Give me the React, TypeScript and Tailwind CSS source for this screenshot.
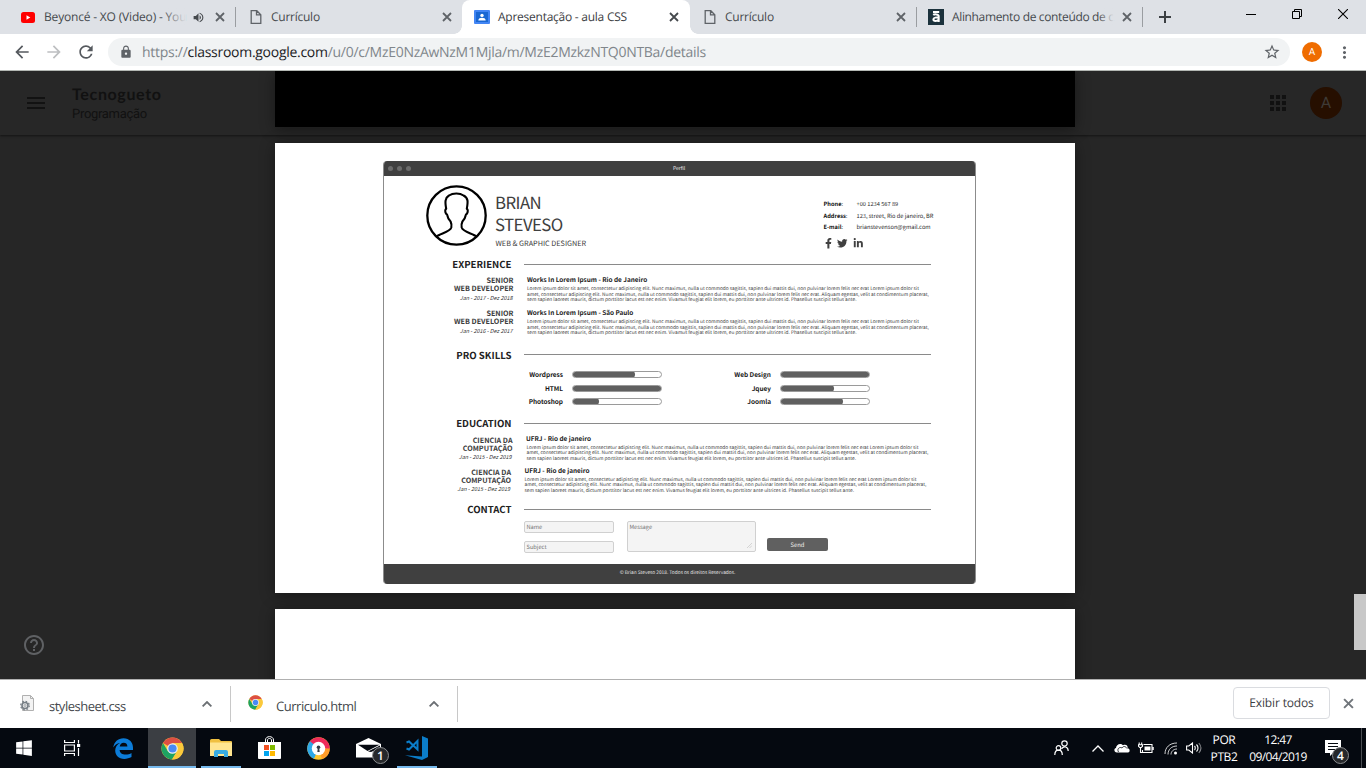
import type { ReactNode } from "react";
import {
  MdArrowBack,
  MdArrowForward,
  MdRefresh,
  MdLock,
  MdStarBorder,
  MdMoreVert,
  MdMenu,
  MdApps,
  MdHelpOutline,
  MdVolumeUp,
} from "react-icons/md";
import { FaFacebookF, FaTwitter, FaLinkedinIn, FaWindows } from "react-icons/fa";

const LOREM = [
  "Lorem ipsum dolor sit amet, consectetur adipiscing elit. Nunc maximus, nulla ut commodo sagittis, sapien dui mattis dui, non pulvinar lorem felis nec erat Lorem ipsum dolor sit",
  "amet, consectetur adipiscing elit. Nunc maximus, nulla ut commodo sagittis, sapien dui mattis dui, non pulvinar lorem felis nec erat. Aliquam egestas, velit at condimentum placerat,",
  "sem sapien laoreet mauris, dictum porttitor lacus est nec enim. Vivamus feugiat elit lorem, eu porttitor ante ultrices id. Phasellus suscipit tellus ante.",
];

function Cross({ className }: { className: string }) {
  return (
    <svg viewBox="0 0 10 10" className={className} fill="none" stroke="currentColor">
      <path d="M1 1l8 8M9 1l-8 8" strokeWidth="1.8" />
    </svg>
  );
}

function FileIcon() {
  return (
    <svg viewBox="0 0 12 16" className="h-4 w-3 shrink-0" fill="none" stroke="#5f6368" strokeWidth="1.3">
      <path d="M1.2 1.7h5.6l4 4v8.6H1.2zM6.5 1.7v4.2h4.3" />
    </svg>
  );
}

function ChromeLogo({ className }: { className: string }) {
  return (
    <svg viewBox="0 0 48 48" className={className}>
      <circle cx="24" cy="24" r="23" fill="#fbc93b" />
      <path d="M24 24 L4.1 12.5 A23 23 0 0 1 43.9 12.5 Z" fill="#dd4f43" />
      <path d="M4.1 12.5 A23 23 0 0 0 23 47 L33.5 29.5 L24 24 L14.5 29.5 Z" fill="#1da362" />
      <path d="M24 12.5h19.9L40 19H24z" fill="#dd4f43" />
      <path d="M24 24L33.5 29.5L23 47A23 23 0 0 0 43.9 12.5H24z" fill="#fbc93b" />
      <circle cx="24" cy="24" r="11" fill="#f1f1f1" />
      <circle cx="24" cy="24" r="8.6" fill="#4a8af4" />
    </svg>
  );
}

function Tab({
  icon,
  title,
  width,
  titleClass,
  fade,
  extra,
  close,
  sep,
}: {
  icon: ReactNode;
  title: string;
  width: string;
  titleClass: string;
  fade?: string;
  extra?: ReactNode;
  close: string;
  sep?: boolean;
}) {
  return (
    <div className={`flex h-[34px] shrink-0 items-center ${width}`}>
      {icon}
      <span className={`whitespace-nowrap text-[12px] leading-[18px] text-[#45494d] ${titleClass}`}>{title}</span>
      {fade && <span className={`h-5 shrink-0 bg-linear-to-r from-[#dee1e600] to-[#dee1e6] ${fade}`} />}
      <span className="ml-auto flex items-center">
        {extra}
        <Cross className={`h-[10px] w-[10px] text-[#5f6368] ${close}`} />
        <span className={`h-5 w-px ${sep ? "bg-[#9a9da1]" : ""}`} />
      </span>
    </div>
  );
}

function TabStrip() {
  return (
    <div className="flex h-[34px] bg-[#dee1e6]">
      <Tab
        width="w-[236px] pl-[21px]"
        icon={
          <svg viewBox="0 0 14 11" className="h-[11px] w-[14px] shrink-0">
            <rect width="14" height="11" rx="2.500" fill="#f00" />
            <path d="M5.500 3.200L9.300 5.500 5.500 7.800z" fill="#fff" />
          </svg>
        }
        title="Beyoncé - XO (Video) - You"
        titleClass="ml-[9px] tracking-[-0.18px]"
        fade="-ml-6 w-6"
        extra={<MdVolumeUp className="mr-[10px] h-[13px] w-[13px] text-[#45494d]" />}
        close="mr-[10px]"
        sep
      />
      <Tab
        width="w-[226px] pl-[14px]"
        icon={<FileIcon />}
        title="Currículo"
        titleClass="ml-[9px] tracking-[-0.25px]"
        close="mr-[9px]"
      />
      <div className="relative flex h-[34px] w-[228px] shrink-0 items-center rounded-t-lg bg-white pl-3">
        <span className="absolute bottom-0 -left-2 h-2 w-2 bg-[radial-gradient(circle_at_0_0,#dee1e6_7.5px,#fff_8px)]" />
        <span className="absolute -right-2 bottom-0 h-2 w-2 bg-[radial-gradient(circle_at_100%_0,#dee1e6_7.5px,#fff_8px)]" />
        <svg viewBox="0 0 16 14" className="h-[14px] w-4 shrink-0">
          <rect width="16" height="14" rx="1" fill="#4285f4" />
          <rect x="2" y="2" width="12" height="10" fill="#1967d2" />
          <circle cx="8" cy="5.4" r="1.7" fill="#fff" />
          <path d="M4.3 10.5c0-2 2-2.700 3.700-2.700s3.700.7 3.700 2.700z" fill="#fff" />
        </svg>
        <span className="ml-2 whitespace-nowrap text-[12px] leading-[18px] tracking-[-0.25px] text-[#3c4043]">
          Apresentação - aula CSS
        </span>
        <Cross className="mr-[11px] ml-auto h-[10px] w-[10px] text-[#45494d]" />
      </div>
      <Tab
        width="w-[227px] pl-[14px]"
        icon={<FileIcon />}
        title="Currículo"
        titleClass="ml-[9px] tracking-[-0.25px]"
        close="mr-[10px]"
        sep
      />
      <Tab
        width="w-[226px] pl-[11px]"
        icon={
          <svg viewBox="0 0 16 16" className="h-4 w-4 shrink-0">
            <rect width="16" height="16" fill="#1c323d" />
            <path
              d="M5 3h6.200M5.200 5.900c1-.8 5.500-1 5.500 1.400v5.700M10.600 8.700c-2-.3-5.200-.4-5.200 1.600 0 2.200 4.100 2 5.200.2"
              stroke="#fff"
              strokeWidth="2"
              fill="none"
            />
          </svg>
        }
        title="Alinhamento de conteúdo de c"
        titleClass="ml-2 tracking-[-0.35px]"
        fade="-ml-4 w-4"
        close="mr-[10px]"
        sep
      />
      <div className="flex items-center pl-4">
        <svg viewBox="0 0 12 12" className="h-3 w-3" stroke="#3c4043" strokeWidth="2">
          <path d="M6 0v12M0 6h12" />
        </svg>
      </div>
      <div className="ml-auto flex h-[28px] items-center gap-9 pr-[18px]">
        <svg viewBox="0 0 10 10" className="h-[10px] w-[10px]" stroke="#000" strokeWidth="1">
          <path d="M0 5.500h10" />
        </svg>
        <svg viewBox="0 0 10 10" className="h-[10px] w-[10px]" fill="none" stroke="#000" strokeWidth="1">
          <path d="M.5 2.500h7v7h-7zM2.500 2.500v-2h7v7h-2" />
        </svg>
        <svg viewBox="0 0 10 10" className="h-[10px] w-[10px]" stroke="#000" strokeWidth="1.100">
          <path d="M0 0l10 10M10 0L0 10" />
        </svg>
      </div>
    </div>
  );
}

function Toolbar() {
  return (
    <div className="flex h-[37px] items-center border-b border-[#b3b7b3] bg-white pl-3">
      <MdArrowBack className="h-5 w-5 text-[#55595e]" />
      <MdArrowForward className="ml-3 h-5 w-5 text-[#bdbfc1]" />
      <MdRefresh className="ml-3 h-5 w-5 text-[#55595e]" />
      <div className="ml-3 flex h-7 w-[1182px] items-center rounded-full bg-[#f1f3f4] pr-[9px] pl-[11px]">
        <MdLock className="h-[14px] w-[14px] text-[#5f6368]" />
        <span className="ml-[9px] whitespace-nowrap pt-px text-[14px] leading-5 tracking-[-0.28px] text-[#80868b]">
          https://<span className="text-[#202124]">classroom.google.com</span>
          /u/0/c/MzE0NzAwNzM1Mjla/m/MzE2MzkzNTQ0NTBa/details
        </span>
        <MdStarBorder className="ml-auto h-[18px] w-[18px] text-[#5f6368]" />
      </div>
      <span className="ml-3 flex h-5 w-5 items-center justify-center rounded-full bg-[#ef6c00] font-['Roboto'] text-[10px] text-white">
        A
      </span>
      <MdMoreVert className="ml-[13px] h-[19px] w-[19px] text-[#5f6368]" />
    </div>
  );
}

function SectionTitle({ title, className }: { title: string; className: string }) {
  return (
    <div className="flex h-4 shrink-0 items-center">
      <h2 className={`w-[127.5px] shrink-0 whitespace-nowrap text-right font-bold leading-4 text-[#222] ${className}`}>
        {title}
      </h2>
      <span className="ml-[12.5px] h-px w-[407px] bg-[#8a8a8a]" />
    </div>
  );
}

function Entry({
  role,
  date,
  title,
  left,
  right,
  titleClass,
  dateClass,
}: {
  role: [string, string];
  date: string;
  title: string;
  left: string;
  right: string;
  titleClass: string;
  dateClass: string;
}) {
  return (
    <div className="flex h-[26px] shrink-0">
      <div className={`shrink-0 whitespace-nowrap text-right ${left}`}>
        <p className="text-[7.200px] font-bold leading-[8.5px] text-[#3c3c3c]">{role[0]}</p>
        <p className="text-[7.200px] font-bold leading-[8.5px] text-[#3c3c3c]">{role[1]}</p>
        <p className={`pr-px text-[5.450px] italic leading-[8px] text-[#333] ${dateClass}`}>{date}</p>
      </div>
      <div className={`shrink-0 whitespace-nowrap ${right}`}>
        <h3 className={`text-[6.400px] font-bold leading-[8px] text-[#222] ${titleClass}`}>{title}</h3>
        <div className="text-[4.810px] leading-[5.5px] text-[#3a3a3a]">
          {LOREM.map((l) => (
            <p key={l}>{l}</p>
          ))}
        </div>
      </div>
    </div>
  );
}

function Skill({ name, value, label }: { name: string; value: number; label: string }) {
  return (
    <div className="flex h-[13.8px] items-center">
      <span className={`shrink-0 whitespace-nowrap text-right text-[6.450px] font-bold leading-[9px] text-[#181818] ${label}`}>
        {name}
      </span>
      <span className="ml-[9px] block h-[7px] w-[90px] overflow-hidden rounded-full border border-[#9a9a9a] bg-white">
        <span
          className="-mt-px -ml-px block h-[7px] rounded-full bg-[#606060]"
          style={{ width: `${value * 0.9}px` }}
        />
      </span>
    </div>
  );
}

function Contact({ label, children }: { label: string; children: ReactNode }) {
  return (
    <div className="flex whitespace-nowrap text-[5.700px] leading-[11.25px]">
      <span className="w-[33px] shrink-0 text-[#444]">
        <b className="text-[#111]">{label}</b>:
      </span>
      <span className="text-[#2a2a2a]">{children}</span>
    </div>
  );
}

function Resume() {
  return (
    <div className="mt-[18px] ml-[108px] flex h-[423px] w-[593px] flex-col overflow-hidden rounded-[4px] border-x border-[#8c8c8c] bg-white font-['Noto_Sans_CJK_SC','Noto_Sans',sans-serif]">
      <div className="-mx-px flex h-[15px] shrink-0 items-center bg-[#404040] pl-[5px]">
        <span className="h-[5px] w-[5px] rounded-full bg-[#6c6c6c]" />
        <span className="ml-1 h-[5px] w-[5px] rounded-full bg-[#6c6c6c]" />
        <span className="ml-1 h-[5px] w-[5px] rounded-full bg-[#6c6c6c]" />
        <span className="ml-[262px] text-[5px] leading-[15px] text-[#eee]">Perfil</span>
      </div>
      <div className="flex h-20 shrink-0">
        <svg viewBox="0 0 61 61" className="mt-[9px] ml-[42px] h-[61px] w-[61px] shrink-0" fill="none" stroke="#000" strokeWidth="2.100">
          <circle cx="30.500" cy="30.500" r="29.200" strokeWidth="2.300" />
          <path
            strokeLinejoin="round"
            d="M10.500 51.500C14 48.500 24 47 25.300 42.500 25.800 40 25.300 38 24.600 36.500 22.600 34.500 21.500 32 21 29.500 19.600 29 18.800 26 19.500 24.500L20.200 23.800C19 17 18.800 13 23 10.500 27 7.800 34 8 37.500 10.500 42.500 13 42 17 40.800 23.800L41.500 24.500C42.200 26 41.400 29 40 29.500 39.500 32 38.400 34.500 36.400 36.500 35.700 38 35.200 40 35.700 42.500 37 47 47 48.500 50.500 51.500"
          />
        </svg>
        <div className="ml-[8px] whitespace-nowrap pt-[15.200px] text-[#404040]">
          <h1 className="text-[16.800px] leading-[22.300px] tracking-[-0.55px]">
            BRIAN
            <br />
            STEVESO
          </h1>
          <p className="mt-[1.500px] ml-[.5px] text-[7.250px] leading-[14px]">WEB &amp; GRAPHIC DESIGNER</p>
        </div>
        <div className="mr-[37.500px] ml-auto w-[114px] pt-[22.300px]">
          <Contact label="Phone">+00 1234 567 89</Contact>
          <Contact label="Address">123, street, Rio de janeiro, BR</Contact>
          <Contact label="E-mail">brianstevenson@gmail.com</Contact>
          <div className="mt-[6px] flex gap-[4.800px] text-[#404040]">
            <FaFacebookF className="h-[10.500px] w-[9px]" />
            <FaTwitter className="h-[10.500px] w-[10.500px]" />
            <FaLinkedinIn className="h-[10.500px] w-[10.500px]" />
          </div>
        </div>
      </div>
      <SectionTitle title="EXPERIENCE" className="text-[9.600px]" />
      <div className="flex h-[74.500px] shrink-0 flex-col gap-[7px] pt-[4.500px]">
        <Entry role={["SENIOR", "WEB DEVELOPER"]} date="Jan - 2017 - Dez 2018" title="Works In Lorem Ipsum - Rio de Janeiro" left="w-[129.500px]" right="ml-[13.500px] -mt-[.5px]" titleClass="mb-[2.300px]" dateClass="mt-[.5px]" />
        <Entry role={["SENIOR", "WEB DEVELOPER"]} date="Jan - 2016 - Dez 2017" title="Works In Lorem Ipsum - São Paulo" left="w-[129.500px]" right="ml-[13.500px] -mt-[.5px]" titleClass="mb-[2.300px]" dateClass="mt-[.5px]" />
      </div>
      <SectionTitle title="PRO SKILLS" className="text-[9.650px]" />
      <div className="flex h-[52.500px] shrink-0 pt-[5px]">
        <div>
          <Skill name="Wordpress" value={70} label="w-[179px]" />
          <Skill name="HTML" value={100} label="w-[179px]" />
          <Skill name="Photoshop" value={30} label="w-[179px]" />
        </div>
        <div>
          <Skill name="Web Design" value={100} label="w-[109px]" />
          <Skill name="Jquey" value={60} label="w-[109px]" />
          <Skill name="Joomla" value={70} label="w-[109px]" />
        </div>
      </div>
      <SectionTitle title="EDUCATION" className="text-[9.600px]" />
      <div className="flex h-[70px] shrink-0 flex-col gap-[6px] pt-[5.500px]">
        <Entry role={["CIENCIA DA", "COMPUTAÇÃO"]} date="Jan - 2015 - Dez 2019" title="UFRJ - Rio de janeiro" left="w-[128.500px]" right="-mt-[2px] ml-[14px]" titleClass="-ml-[.5px] mb-[2px]" dateClass="-mt-[.7px]" />
        <Entry role={["CIENCIA DA", "COMPUTAÇÃO"]} date="Jan - 2015 - Dez 2019" title="UFRJ - Rio de janeiro" left="w-[127px]" right="-mt-[2px] ml-[13.500px]" titleClass="mb-[2px]" dateClass="-mt-[.7px]" />
      </div>
      <SectionTitle title="CONTACT" className="text-[9.600px]" />
      <div className="flex grow pt-[3.500px] pl-[140px] text-[5.700px] leading-[11px] text-[#757575]">
        <div className="flex w-[90px] flex-col gap-[8px]">
          <div className="h-3 rounded-[2px] border border-[#d0d0d0] bg-[#f4f4f4] pl-[1.500px] leading-[10px]">Name</div>
          <div className="h-3 rounded-[2px] border border-[#d0d0d0] bg-[#f4f4f4] pl-[1.500px] leading-[10px]">Subject</div>
        </div>
        <div className="ml-[13px] flex h-[31px] w-[129px] items-end justify-between rounded-[2px] border border-[#d0d0d0] bg-[#f4f4f4] pl-[1.500px]">
          <span className="self-start leading-[10px]">Message</span>
          <svg viewBox="0 0 6 6" className="mr-[3px] mb-[3px] h-[5px] w-[5px]" stroke="#c4c4c4" strokeWidth=".8">
            <path d="M0 6L6 0M3 6L6 3" />
          </svg>
        </div>
        <div className="mt-[17px] ml-[11px] h-[13px] w-[61px] rounded-[2px] bg-[#606060] text-center text-[5.900px] leading-[13px] text-[#eee]">
          Send
        </div>
      </div>
      <div className="-mx-px h-5 shrink-0 bg-[#404040] text-center text-[4.800px] leading-[18px] text-[#e6e6e6]">
        <span className="mr-[4px]">© Brian Steveso 2018. Todos os direitos Reservados.</span>
      </div>
    </div>
  );
}

function Viewer() {
  return (
    <main className="relative h-[608px] overflow-hidden bg-[#262626]">
      <header className="flex h-16 items-center bg-[#272727] pr-6 pl-6 font-['Roboto'] text-[#111] shadow-[0_1px_2px_#141414]">
        <MdMenu className="h-6 w-6 text-[#121212]" />
        <div className="ml-6 pt-[2px]">
          <p className="font-['Lato'] text-[16px] font-bold leading-[21px] tracking-[0.65px]">Tecnogueto</p>
          <p className="text-[13px] leading-[19px] tracking-[-0.3px]">Programação</p>
        </div>
        <MdApps className="mr-5 ml-auto h-6 w-6 text-[#111]" />
        <span className="flex h-8 w-8 items-center justify-center rounded-full bg-[#260f00] text-[16px] text-[#3e3a36]">
          A
        </span>
      </header>
      <MdHelpOutline className="mt-[498px] ml-[22px] h-6 w-6 text-[#5f6164]" />
      <div className="absolute top-0 left-[275px] flex w-[800px] flex-col gap-4">
        <div className="h-14 bg-black shadow-[0_2px_14px_rgba(0,0,0,0.4)]" />
        <div className="flex h-[450px] bg-white shadow-[0_2px_14px_rgba(0,0,0,0.4)]">
          <Resume />
        </div>
        <div className="h-[80px] bg-white shadow-[0_2px_14px_rgba(0,0,0,0.4)]" />
      </div>
      <div className="absolute top-[523px] right-0 h-14 w-3 bg-[#c8c8c8]" />
    </main>
  );
}

function Chevron() {
  return (
    <svg viewBox="0 0 10 6" className="h-[6px] w-[10px]" fill="none" stroke="#6b6f73" strokeWidth="1.800">
      <path d="M.6 5.400L5 1l4.400 4.400" />
    </svg>
  );
}

function Downloads() {
  return (
    <div className="flex h-[49px] items-center border-t border-[#b0b0b0] bg-white text-[13px] leading-5 text-[#45494d]">
      <div className="flex h-9 w-[231px] items-center border-r border-[#c8c8c8] pl-5">
        <svg viewBox="0 0 14 16" className="mb-[2px] h-4 w-[14px]" fill="none">
          <path d="M2.500.5h8l3 3v12h-11z" fill="#f3f3f3" stroke="#b0b0b0" />
          <path d="M10.500.5v3h3" stroke="#b0b0b0" />
          <circle cx="5" cy="10.500" r="3" stroke="#777f86" strokeWidth="1.600" fill="#eee" />
          <circle cx="5" cy="10.500" r="4.300" stroke="#777f86" strokeWidth="1.200" strokeDasharray="1.700 1.677" />
          <circle cx="5" cy="10.500" r="1" stroke="#777f86" strokeWidth=".6" />
        </svg>
        <span className="ml-[15px] pt-1 tracking-[-0.48px]">stylesheet.css</span>
        <span className="mr-[18px] ml-auto">
          <Chevron />
        </span>
      </div>
      <div className="flex h-9 w-[227px] items-center border-r border-[#c8c8c8] pl-[17px]">
        <ChromeLogo className="mb-[3px] h-[15px] w-[15px]" />
        <span className="ml-[13px] pt-1 tracking-[-0.45px]">Curriculo.html</span>
        <span className="mr-[18px] ml-auto">
          <Chevron />
        </span>
      </div>
      <div className="-mt-[2px] ml-auto flex h-8 w-[97px] items-center justify-center rounded-[4px] border border-[#dadce0] text-[12px] tracking-[-0.15px] text-[#3c4043]">
        Exibir todos
      </div>
      <Cross className="-mt-[2px] mr-[12px] ml-[13px] h-[11px] w-[11px] text-[#70757a]" />
    </div>
  );
}

function Badge({ children, className }: { children: ReactNode; className: string }) {
  return (
    <span className={`absolute flex h-[17px] w-[17px] items-center justify-center rounded-full border border-[#8a8c8f] bg-[#26282b] text-[12px] font-semibold leading-none text-white ${className}`}>
      {children}
    </span>
  );
}

function Taskbar() {
  return (
    <div className="flex h-10 bg-[#050910] text-white">
      <div className="flex w-12 items-center justify-center">
        <FaWindows className="h-[18px] w-4" />
      </div>
      <div className="flex w-12 items-center justify-center">
        <svg viewBox="0 0 17 16" className="h-4 w-[17px]" fill="none" stroke="#fff" strokeWidth="1.200">
          <path d="M.6 0v2.500h9.800V0M.6 16v-2.500h9.800V16M.6 5h9.800v6H.6zM14.500 0v3.500M14.500 8v8" />
          <rect x="13" y="4" width="3.200" height="3" fill="#fff" stroke="none" />
        </svg>
      </div>
      <div className="flex w-[52px] items-center justify-center pl-[2px]">
        <svg viewBox="0 0 20 21" className="h-[21px] w-5" fill="#0c7cd8">
          <path d="M.2 9.600C1 4 5 .2 10.500.2c6 0 9.500 4.300 9.500 9.500v2.400H6.600c.2 3.200 2.800 4.500 5.900 4.500 2.400 0 4.500-.8 6-1.700v4.200c-2 1.200-4.600 1.800-7.200 1.800-5.700 0-9.100-3.600-9.100-8.300 0-3.500 1.900-6.200 4.800-7.600C3.900 5.400 1.600 7.300.2 9.600zM6.700 8.600h7.700c0-2.500-1.300-3.900-3.700-3.900-2.200 0-3.600 1.500-4 3.900z" />
        </svg>
      </div>
      <div className="flex w-12 items-center justify-center border-b-2 border-[#76b9ed] bg-[#3b3e43]">
        <ChromeLogo className="mt-[2px] h-[23px] w-[23px]" />
      </div>
      <div className="flex w-[50px] justify-center">
        <div className="flex w-10 items-center justify-center border-b-2 border-[#76b9ed] pt-[2px]">
          <svg viewBox="0 0 22 18" className="h-[18px] w-[22px]">
            <path d="M0 1.500Q0 0 1.500 0H9l2 2h10q1 0 1 1v14H0z" fill="#f0c040" />
            <path d="M0 3.500h22V17H0z" fill="#ffe590" />
            <path d="M4 18v-5q0-2 2-2h10q2 0 2 2v5h-4v-3H8v3z" fill="#3aace3" />
          </svg>
        </div>
      </div>
      <div className="flex w-[47px] items-center justify-center pb-px">
        <svg viewBox="0 0 23 23" className="h-[23px] w-[23px]">
          <path d="M7.500 6V4c0-4.500 8-4.500 8 0v2M9.500 6V4c0-2 4-2 4 0v2" fill="none" stroke="#fff" strokeWidth="1" />
          <path d="M0 6h23v16q0 1-1 1H1q-1 0-1-1z" fill="#fff" />
          <path d="M6 9h5v5H6z" fill="#f25022" />
          <path d="M12 9h5v5h-5z" fill="#7fba00" />
          <path d="M6 15h5v5H6z" fill="#00a4ef" />
          <path d="M12 15h5v5h-5z" fill="#ffb900" />
        </svg>
      </div>
      <div className="flex w-[51px] items-center justify-center">
        <svg viewBox="0 0 23 23" className="h-[23px] w-[23px]">
          <circle cx="11.500" cy="11.500" r="11.200" fill="#ffc62e" />
          <path d="M11.500 11.500L2 5.500A11.200 11.200 0 0 1 22.700 12z" fill="#ee2a5a" />
          <path d="M11.500 11.500L22.700 11.500A11.200 11.200 0 0 1 15 22z" fill="#ff9d2b" />
          <path d="M11.500 11.500L3 4.200A11.200 11.200 0 0 0 7 21.800z" fill="#2da8e8" />
          <circle cx="11.500" cy="11.500" r="6.700" fill="#fff" />
          <circle cx="11.500" cy="10.300" r="1.800" fill="#333b46" />
          <path d="M10.800 11h1.400l.5 4h-2.400z" fill="#333b46" />
        </svg>
      </div>
      <div className="relative flex w-12 items-center pb-px pl-3">
        <svg viewBox="0 0 25 20" className="h-5 w-[25px]">
          <path d="M0 6L12.500 0 25 6V19.500H0z" fill="#fff" />
          <path d="M2 6.800h21.500L11.500 13z" fill="#050910" />
          <path d="M12 13.500L24 7.500v2.500l-9 4z" fill="#050910" />
        </svg>
        <Badge className="top-[19px] left-[28px]">1</Badge>
      </div>
      <div className="flex w-[50px] justify-center">
        <div className="flex w-10 items-center justify-center border-b-2 border-[#76b9ed] pt-[2px]">
          <svg viewBox="0 0 24 24" className="h-6 w-6" fill="none" stroke="#0b7dc9">
            <path d="M17 0l6 2.500v18.500L17 24 0 19.300l17 1.200z" fill="#0b7dc9" stroke="none" />
            <path d="M1.500 6.500L4 5.500 12.500 13.500V5L4 13.500 1.500 12.500" strokeWidth="2" />
          </svg>
        </div>
      </div>
      <div className="ml-auto flex items-center text-[12px]">
        <svg viewBox="0 0 15 16" className="h-4 w-[15px]" fill="none" stroke="#fff" strokeWidth="1.200">
          <circle cx="10.500" cy="3.500" r="2.700" />
          <circle cx="4.500" cy="8" r="2.300" />
          <path d="M.8 15c0-6.500 7.500-6.500 7.500 0M7.500 8.800c2.500-3.500 6.700-2 6.700 2.200" />
        </svg>
        <svg viewBox="0 0 12 7" className="ml-[23px] h-[7px] w-3" fill="none" stroke="#fff" strokeWidth="1.300">
          <path d="M.5 6.500L6 1l5.500 5.500" />
        </svg>
        <svg viewBox="0 0 16 10" className="ml-[10px] h-[10px] w-4" fill="#fff">
          <path d="M3 9.500C0 9.500-.5 5.500 2 5 2 1.500 6.500-.5 9 2.200 12.500 1 14 3 13.500 5.200 16.500 5.500 16 9.500 14 9.500z" />
          <path d="M4.500 9C2.500 5.500 6 3.500 8 5c1.500-2.500 4-1.500 5 .5" fill="none" stroke="#050910" strokeWidth=".8" />
        </svg>
        <svg viewBox="0 0 16 12" className="ml-2 h-3 w-4" fill="none" stroke="#fff" strokeWidth="1.100">
          <path d="M5.500 2.500h8.500v8H4.500V8M15.200 5v3M1.200.5v2M3.700.5v2M.5 2.800h4v1.500l-1.200 1.200H1.700L.5 4.300zM2.500 5.500v5h2" />
          <path d="M6.500 4.500h6v4h-6z" fill="#fff" stroke="none" />
        </svg>
        <svg viewBox="0 0 14 13" className="ml-[10px] h-[13px] w-[14px]" fill="none" stroke="#fff" strokeWidth="1">
          <path d="M1 12C1 5.500 5.500 1 13 1M4 12.500C4 7.500 7.500 4 13 4M7 12.500C7 9.500 9.500 7 13 7" opacity=".8" />
          <circle cx="11.500" cy="11" r="1.500" fill="#fff" stroke="none" />
        </svg>
        <svg viewBox="0 0 16 12" className="ml-[8px] h-3 w-4" fill="none" stroke="#fff" strokeWidth="1.100">
          <path d="M.6 4v4h2.200L6.500 11V1L2.800 4zM8.500 4c1 1 1 3 0 4M10.500 2.500c2 2 2 5 0 7" />
          <path d="M12.800 1c2.600 3 2.600 7 0 10" opacity=".5" />
        </svg>
        <div className="ml-[8px] w-7 text-center leading-[17px] tracking-[-0.4px]">
          <p>POR</p>
          <p>PTB2</p>
        </div>
        <div className="ml-[9px] w-[62px] whitespace-nowrap text-center leading-[17px] tracking-[-0.6px]">
          <p>12:47</p>
          <p>09/04/2019</p>
        </div>
        <div className="relative ml-4 h-10 w-9">
          <svg viewBox="0 0 16 16" className="mt-3 h-4 w-4">
            <path d="M0 0h16v13H8l-3 3v-3H0z" fill="#fff" />
            <path d="M3 3.500h10M3 6.500h10M3 9.500h7" stroke="#050910" strokeWidth="1" />
          </svg>
          <Badge className="top-[19px] left-[7px]">4</Badge>
        </div>
        <span className="mr-1 h-10 w-px bg-[#4a4d52]" />
      </div>
    </div>
  );
}

export default function App() {
  return (
    <div className="h-[768px] w-[1366px] overflow-hidden bg-white font-['Open_Sans','Noto_Sans',sans-serif] [text-rendering:geometricPrecision]">
      <TabStrip />
      <Toolbar />
      <Viewer />
      <Downloads />
      <Taskbar />
    </div>
  );
}
